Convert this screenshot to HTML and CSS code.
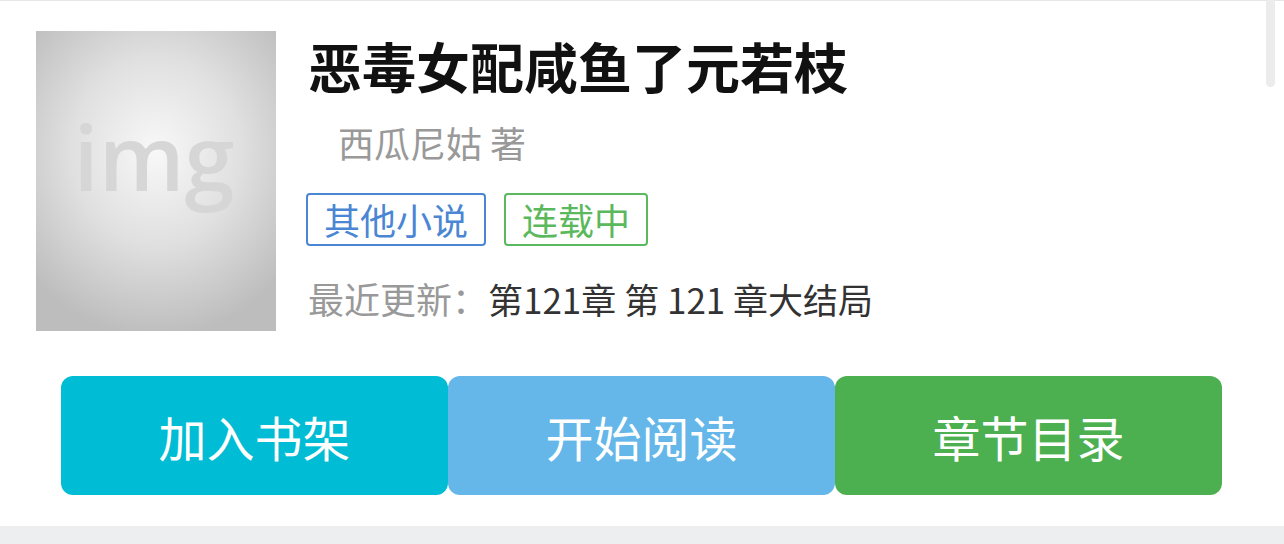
FILE: index.html
```html
<!DOCTYPE HTML>
<html>
<head>
	<title>恶毒女配咸鱼了元若枝</title>
	<meta charset="utf-8" />
	<link rel="stylesheet" href="styles.css">
</head>
<body>
<div class="book">
	<div class="info">
		<div class="cover"><span>img</span></div>
		<div class="meta">
			<h1>恶毒女配咸鱼了元若枝</h1>
			<p class="author">西瓜尼姑 著</p>
			<div class="tags">
				<span class="tag tag-type">其他小说</span>
				<span class="tag tag-state">连载中</span>
			</div>
			<p class="update"><span class="label">最近更新：</span>第121章 第 121 章大结局</p>
		</div>
	</div>
	<div class="actions">
		<a href="#" class="btn btn-shelf">加入书架</a>
		<a href="#" class="btn btn-read">开始阅读</a>
		<a href="#" class="btn btn-list">章节目录</a>
	</div>
</div>
<div class="band"></div>
<div class="scroll-thumb"></div>
</body>
</html>
```

FILE: styles.css
```css
body{
	font-family: "Noto Sans CJK SC", "Noto Sans", sans-serif;
	margin: 0px;
	padding: 0px;
	background-color: #fff;
	height: 544px;
	overflow: hidden;
}
a{
	text-decoration: none;
}
p, h1{
	margin: 0px;
}
.book{
	border-top: 1px solid #e6e6e6;
	padding-top: 30px;
	height: 495px;
	box-sizing: border-box;
}
.info{
	display: flex;
	padding-left: 36px;
	gap: 30px;
}
.cover{
	width: 240px;
	height: 300px;
	flex-shrink: 0;
	background: radial-gradient(ellipse 70% 62% at 50% 40%, #f8f8f8 0%, #e0e0e0 50%, #bdbdbd 100%);
	display: flex;
	align-items: center;
	justify-content: center;
}
.cover span{
	font-family: "Open Sans", sans-serif;
	font-size: 90px;
	font-weight: 600;
	color: #d6d6d6;
	margin-top: -50px;
	margin-left: -4px;
}
.meta h1{
	font-size: 54px;
	line-height: 70px;
	font-weight: bold;
	color: #111;
	margin-left: 2px;
}
.author{
	font-size: 36px;
	line-height: 50px;
	color: #999;
	margin-top: 16px;
	margin-left: 32px;
}
.tags{
	display: flex;
	gap: 18px;
	margin-top: 26px;
}
.tag{
	font-size: 36px;
	line-height: 49px;
	padding: 0px 16px;
	border: 2px solid;
	border-radius: 4px;
}
.tag-type{
	color: #4a86d4;
	border-color: #4a86d4;
}
.tag-state{
	color: #5cb85c;
	border-color: #5cb85c;
}
.update{
	font-size: 35px;
	line-height: 50px;
	color: #333;
	margin-top: 27px;
	margin-left: 2px;
}
.update .label{
	color: #999;
	font-size: 36px;
}
.actions{
	display: flex;
	margin-top: 45px;
	padding-left: 61px;
}
.btn{
	width: 387px;
	height: 119px;
	border-radius: 12px;
	color: #fff;
	font-size: 48px;
	display: flex;
	align-items: center;
	justify-content: center;
}
.btn-shelf{
	background-color: #00bcd4;
}
.btn-read{
	background-color: #64b7e8;
}
.btn-list{
	background-color: #4caf50;
}
.band{
	margin-top: 31px;
	height: 18px;
	background-color: #eceeef;
}
.scroll-thumb{
	position: fixed;
	top: 0px;
	right: 9px;
	width: 9px;
	height: 87px;
	border-radius: 0px 0px 5px 5px;
	background-color: #ececec;
}
```
